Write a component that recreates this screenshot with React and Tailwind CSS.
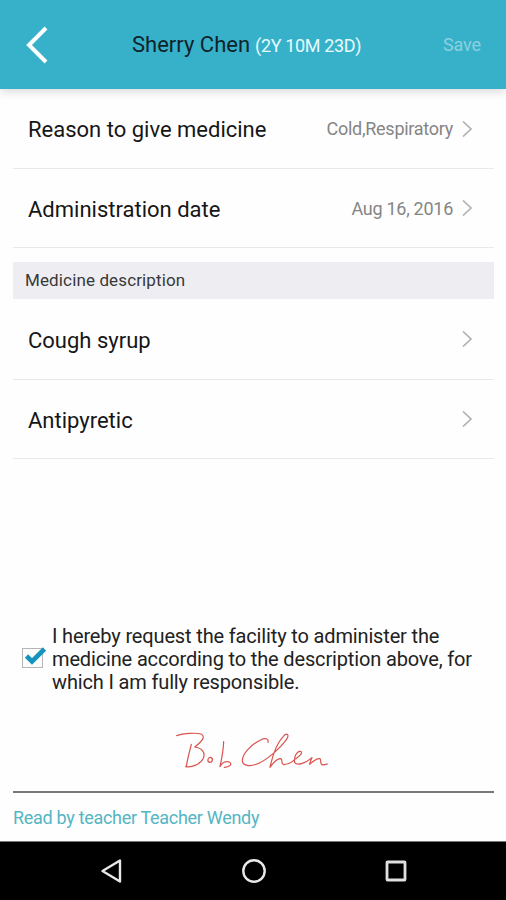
import React, { useState } from "react";

const details = [
  { label: "Reason to give medicine", value: "Cold,Respiratory" },
  { label: "Administration date", value: "Aug 16, 2016" },
];

const medicines = [{ label: "Cough syrup" }, { label: "Antipyretic" }];

function Chevron() {
  return (
    <svg width="10" height="16" viewBox="0 0 10 16" fill="none" className="shrink-0">
      <path d="M1 0.5 L9 8 L1 15.5" stroke="#b2b2b2" strokeWidth="1.7" />
    </svg>
  );
}

function Row({ label, value }) {
  return (
    <button
      type="button"
      className="flex w-full items-center border-b border-[#e9e9e9] pl-[15px] pr-[22px] text-left"
    >
      <span className="flex-1 pt-[2px] text-[22px] text-[#161616]">{label}</span>
      {value && (
        <span className="mr-[9px] text-[18px] tracking-[-0.27px] text-[#858585]">{value}</span>
      )}
      <Chevron />
    </button>
  );
}

function Signature() {
  return (
    <svg
      width="190"
      height="70"
      viewBox="0 0 570 210"
      fill="none"
      stroke="#d9534f"
      strokeWidth="3.6"
      strokeLinecap="round"
      strokeLinejoin="round"
      role="img"
      aria-label="Bob Chen"
    >
      <path d="M50 62 C68 56 108 52 123 57 C137 64 128 78 104 96 C126 99 137 112 130 130 C122 148 95 158 77 155" />
      <path d="M94 88 C89 108 82 134 79 154" />
      <path d="M151 127 C142 128 141 140 149 142 C158 142 161 129 151 127" />
      <path d="M191 80 C190 104 185 132 180 155 C186 142 198 138 208 141 C218 147 209 157 193 157" />
      <path d="M324 82 C327 70 315 68 302 75 C274 88 247 116 247 137 C248 153 270 155 291 147 C320 136 361 99 379 74 C390 57 380 53 370 64 C350 85 337 124 330 157 C339 144 352 131 362 131 C370 133 361 147 371 149 C386 149 397 141 407 131 C421 122 429 113 422 109 C410 107 401 128 404 142 C411 153 435 146 456 128 C452 137 449 143 449 148 C460 138 470 130 479 131 C486 134 478 144 486 149 C493 151 498 147 503 147" />
    </svg>
  );
}

export default function App() {
  const [agreed, setAgreed] = useState(true);

  return (
    <div className="flex h-[900px] w-[506px] flex-col bg-[#fefefe] font-['Roboto',sans-serif]">
      <header className="z-10 flex h-[89px] shrink-0 items-center bg-[#37b1c9] shadow-[0_2px_10px_rgba(0,0,0,0.16)]">
        <button type="button" aria-label="Back" className="ml-[26px] w-[106px]">
          <svg width="22" height="38" viewBox="0 0 22 38" fill="none">
            <path d="M20 2 L3 19 L20 36" stroke="white" strokeWidth="4" />
          </svg>
        </button>
        <h1 className="flex flex-1 items-baseline whitespace-nowrap">
          <span className="text-[22px] text-[#10232b]">Sherry Chen</span>
          <span className="ml-[5px] text-[18px] tracking-[-0.35px] text-[#e6fbfd]">(2Y 10M 23D)</span>
        </h1>
        <button type="button" className="mr-[25px] text-[18px] tracking-[-0.1px] text-[#8bd0de]">
          Save
        </button>
      </header>

      <main className="flex flex-1 flex-col pr-[12px] pl-[13px]">
        <section className="grid grid-rows-[80px_79px]">
          {details.map((item) => (
            <Row key={item.label} {...item} />
          ))}
        </section>

        <h2 className="mt-[14px] flex h-[37px] items-center bg-[#eeeef2] pt-px pl-3 text-[17px] tracking-[0.13px] text-[#383838]">
          Medicine description
        </h2>
        <section className="grid grid-rows-[81px_79px]">
          {medicines.map((item) => (
            <Row key={item.label} {...item} />
          ))}
        </section>

        <div className="mt-auto">
          <label className="flex items-center pl-[8px]">
            <input
              type="checkbox"
              checked={agreed}
              onChange={() => setAgreed(!agreed)}
              className="sr-only"
            />
            <svg width="26" height="24" viewBox="0 0 26 24" fill="none" className="mb-[6px] shrink-0">
              <rect x="1.5" y="3.5" width="20" height="19" fill="#fcfcfc" stroke="#b5b5b5" />
              {agreed && <path d="M5.5 11 L11 16.5 L23.5 4" stroke="#1694bd" strokeWidth="4.6" />}
            </svg>
            <span className="ml-[5px] text-[20px] leading-[23px] tracking-[-0.15px] whitespace-nowrap text-[#222]">
              I hereby request the facility to administer the
              <br />
              medicine according to the description above, for
              <br />
              which I am fully responsible.
            </span>
          </label>
          <div className="mt-[21px] flex h-[78px] border-b-2 border-[#777] pl-[147px]">
            <Signature />
          </div>
          <p className="flex h-[48px] items-center pt-px text-[18px] tracking-[-0.3px] text-[#55b5c3]">
            Read by teacher Teacher Wendy
          </p>
        </div>
      </main>

      <nav className="flex h-[59px] shrink-0 items-center border-t border-[#777] bg-black pl-[100px]">
        <button type="button" aria-label="Back">
          <svg width="24" height="26" viewBox="0 0 24 26" fill="none">
            <path d="M20 2.5 V23.5 L2.5 13 Z" stroke="#e8e8e8" strokeWidth="2.4" strokeLinejoin="round" />
          </svg>
        </button>
        <button type="button" aria-label="Home" className="ml-[117px]">
          <svg width="26" height="26" viewBox="0 0 26 26" fill="none">
            <circle cx="13" cy="13" r="10.7" stroke="#e8e8e8" strokeWidth="2.4" />
          </svg>
        </button>
        <button type="button" aria-label="Recent apps" className="ml-[117px]">
          <svg width="24" height="24" viewBox="0 0 24 24" fill="none">
            <rect x="3" y="3" width="18" height="18" rx="0.5" stroke="#e0e0e0" strokeWidth="2.8" />
          </svg>
        </button>
      </nav>
    </div>
  );
}
